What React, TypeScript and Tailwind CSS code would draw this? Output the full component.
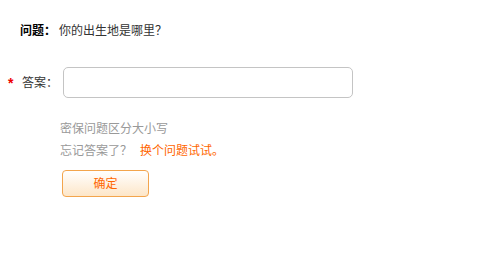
export default function App() {
  return (
    <div
      className="w-[498px] h-[269px] bg-white text-[12px] text-[#333]"
      style={{ fontFamily: '"Liberation Sans", "Noto Sans CJK SC", sans-serif' }}
    >
      {/* 问题 */}
      <div className="flex items-center h-[14px] ml-[20px] relative top-[24px]">
        <span className="font-bold text-black">问题：</span>
        <span className="ml-[3px]">你的出生地是哪里？</span>
      </div>

      {/* 答案 */}
      <div className="flex items-center h-[31px] mt-[53px] ml-[8px]">
        <span className="text-[#e00] w-[14px] text-[14px] font-bold leading-none">*</span>
        <span className="w-[41px]">答案：</span>
        <input
          type="text"
          className="w-[290px] h-[31px] rounded-[5px] border border-[#c4c4c4] outline-none px-2 text-[12px]"
        />
      </div>

      {/* 提示 */}
      <div className="ml-[60px] mt-[24px] text-[#999]">
        <div className="h-[14px] leading-[14px]">密保问题区分大小写</div>
        <div className="h-[14px] leading-[14px] mt-[8px] flex">
          <span>忘记答案了？</span>
          <a href="#" className="ml-[8px] text-[#f60]">换个问题试试。</a>
        </div>
      </div>

      <button
        type="button"
        className="ml-[62px] mt-[12px] w-[87px] h-[27px] rounded-[4px] border border-[#f3a54d] bg-gradient-to-b from-white to-[#fde6c8] text-[#f60] text-[12px]"
      >
        确定
      </button>
    </div>
  );
}
